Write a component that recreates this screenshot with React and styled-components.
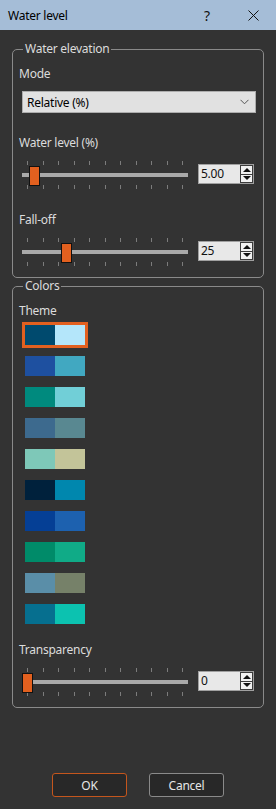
import React from "react";
import styled, { createGlobalStyle } from "styled-components";

const Global = createGlobalStyle`
  html, body { margin: 0; padding: 0; background: #333333; }
  body { width: 276px; height: 809px; overflow: hidden; font-family: "Segoe UI", "Noto Sans", "Open Sans", sans-serif; font-size: 12px; letter-spacing: -0.25px; }
  * { box-sizing: border-box; }
`;

const Dialog = styled.div`
  width: 276px;
  height: 809px;
  background: #333333;
  display: flex;
  flex-direction: column;
`;

const TitleBar = styled.div`
  height: 30px;
  background: #a5bdd7;
  display: flex;
  align-items: center;
  padding: 0 0 0 8px;
  color: #000;
  font-size: 12px;
`;

const Title = styled.span`
  flex: 1;
`;

const TitleBtn = styled.span`
  width: 46px;
  height: 30px;
  display: flex;
  align-items: center;
  justify-content: center;
  font-size: 14px;
  color: #111;
`;

const Body = styled.div`
  display: flex;
  flex-direction: column;
  padding: 11px 12px 0 12px;
`;

const Group = styled.fieldset`
  margin: 0;
  padding: 0;
  border: 1px solid #8a8a8a;
  border-radius: 5px;
  min-width: 0;
`;

const Legend = styled.legend`
  margin-left: 10px;
  padding: 0 2px;
  line-height: 16px;
  color: #dcdcdc;
  font-size: 12px;
`;

const GroupInner = styled.div`
  display: flex;
  flex-direction: column;
  align-items: flex-start;
  padding: 9px 7px 11px 6px;
`;

const Label = styled.div`
  color: #dcdcdc;
  line-height: 16px;
  font-size: 12px;
  margin-top: ${(p) => p.$mt || 0}px;
`;

const Combo = styled.div`
  align-self: stretch;
  margin: 9px 0 0 3px;
  height: 22px;
  background: #e1e1e1;
  border: 1px solid #adadad;
  display: flex;
  align-items: center;
  padding: 0 6px 0 4px;
  color: #000;
`;

const ComboText = styled.span`
  flex: 1;
`;

const SliderRow = styled.div`
  align-self: stretch;
  margin: 10px 1px 0 3px;
  display: flex;
  gap: 10px;
  height: 28px;
`;

const SliderBox = styled.div`
  position: relative;
  width: 166px;
  height: 28px;
  display: flex;
  flex-direction: column;
`;

const TickRow = styled.div`
  height: 4px;
  padding: 0 5px;
  display: flex;
  justify-content: space-between;
  margin-top: ${(p) => p.$mt || 0}px;
`;

const Tick = styled.span`
  width: 1px;
  height: 4px;
  background: #7c7c7c;
`;

const Track = styled.div`
  margin-top: 8px;
  height: 4px;
  background: #a9a9a9;
`;

const Handle = styled.div`
  position: absolute;
  top: 5px;
  width: 11px;
  height: 20px;
  background: #e2601f;
  border: 1px solid #111;
`;

const Spin = styled.div`
  margin-top: 3px;
  width: 56px;
  height: 20px;
  background: #e8e8e8;
  border: 1px solid #a0a0a0;
  display: flex;
  align-items: stretch;
`;

const SpinText = styled.span`
  flex: 1;
  padding-left: 2px;
  line-height: 18px;
  color: #111;
  font-size: 12px;
`;

const SpinBtns = styled.div`
  width: 13px;
  display: flex;
  flex-direction: column;
`;

const SpinBtn = styled.div`
  flex: 1;
  border: 1px solid #3c3c3c;
  background: #f2f2f2;
  display: flex;
  align-items: center;
  justify-content: center;
  & + & { border-top: none; }
`;

const Tri = styled.span`
  width: 0;
  height: 0;
  border-left: 4px solid transparent;
  border-right: 4px solid transparent;
  ${(p) => (p.$down ? "border-top: 4px solid #111;" : "border-bottom: 4px solid #111;")}
`;

const SwatchList = styled.div`
  margin: 6px 0 0 6px;
  display: flex;
  flex-direction: column;
  gap: 11px;
`;

const Swatch = styled.div`
  width: 60px;
  height: 20px;
  display: flex;
  outline: ${(p) => (p.$selected ? "3px solid #e2601f" : "none")};
`;

const Half = styled.span`
  flex: 1;
  background: ${(p) => p.$c};
`;

const Buttons = styled.div`
  margin-top: 65px;
  display: flex;
  justify-content: center;
  gap: 22px;
`;

const Button = styled.div`
  width: 75px;
  height: 24px;
  border: 1px solid ${(p) => (p.$primary ? "#c4561d" : "#8a8a8a")};
  border-radius: 3px;
  background: #282828;
  color: #e6e6e6;
  display: flex;
  align-items: center;
  justify-content: center;
  font-size: 12px;
`;

const Slider = ({ value }) => {
  const center = 5 + value * 1.56;
  return (
    <SliderBox>
      <TickRow>
        {Array.from({ length: 11 }).map((_, i) => (
          <Tick key={i} />
        ))}
      </TickRow>
      <Track />
      <TickRow $mt={8}>
        {Array.from({ length: 11 }).map((_, i) => (
          <Tick key={i} />
        ))}
      </TickRow>
      <Handle style={{ left: Math.round(center - 5.5) }} />
    </SliderBox>
  );
};

const SpinBox = ({ text }) => (
  <Spin>
    <SpinText>{text}</SpinText>
    <SpinBtns>
      <SpinBtn>
        <Tri />
      </SpinBtn>
      <SpinBtn>
        <Tri $down />
      </SpinBtn>
    </SpinBtns>
  </Spin>
);

const SliderField = ({ value, text }) => (
  <SliderRow>
    <Slider value={value} />
    <SpinBox text={text} />
  </SliderRow>
);

const themes = [
  ["#004a6e", "#b4e6fa"],
  ["#1e50a0", "#41a8c1"],
  ["#008a7e", "#71cfd7"],
  ["#3d6a8e", "#598891"],
  ["#7ec8b8", "#c3c499"],
  ["#00213c", "#0087ae"],
  ["#053f95", "#1d61af"],
  ["#008b69", "#10ab87"],
  ["#5a8ea8", "#768169"],
  ["#066f8f", "#0cc2b0"],
];

export default function App() {
  return (
    <Dialog>
      <Global />
      <TitleBar>
        <Title>Water level</Title>
        <TitleBtn>?</TitleBtn>
        <TitleBtn>
          <svg width="11" height="11" viewBox="0 0 11 11">
            <path d="M0.5 0.5L10.5 10.5M10.5 0.5L0.5 10.5" stroke="#111" strokeWidth="1" fill="none" />
          </svg>
        </TitleBtn>
      </TitleBar>
      <Body>
        <Group>
          <Legend>Water elevation</Legend>
          <GroupInner>
            <Label>Mode</Label>
            <Combo>
              <ComboText>Relative (%)</ComboText>
              <svg width="9" height="6" viewBox="0 0 9 6">
                <path d="M0.5 0.8L4.5 4.8L8.5 0.8" stroke="#555" strokeWidth="1" fill="none" />
              </svg>
            </Combo>
            <Label $mt={22}>Water level (%)</Label>
            <SliderField value={5} text="5.00" />
            <Label $mt={23}>Fall-off</Label>
            <SliderField value={25} text="25" />
          </GroupInner>
        </Group>
        <Group>
          <Legend>Colors</Legend>
          <GroupInner>
            <Label>Theme</Label>
            <SwatchList>
              {themes.map(([a, b], i) => (
                <Swatch key={i} $selected={i === 0}>
                  <Half $c={a} />
                  <Half $c={b} />
                </Swatch>
              ))}
            </SwatchList>
            <Label $mt={18}>Transparency</Label>
            <SliderField value={0} text="0" />
          </GroupInner>
        </Group>
        <Buttons>
          <Button $primary>OK</Button>
          <Button>Cancel</Button>
        </Buttons>
      </Body>
    </Dialog>
  );
}
